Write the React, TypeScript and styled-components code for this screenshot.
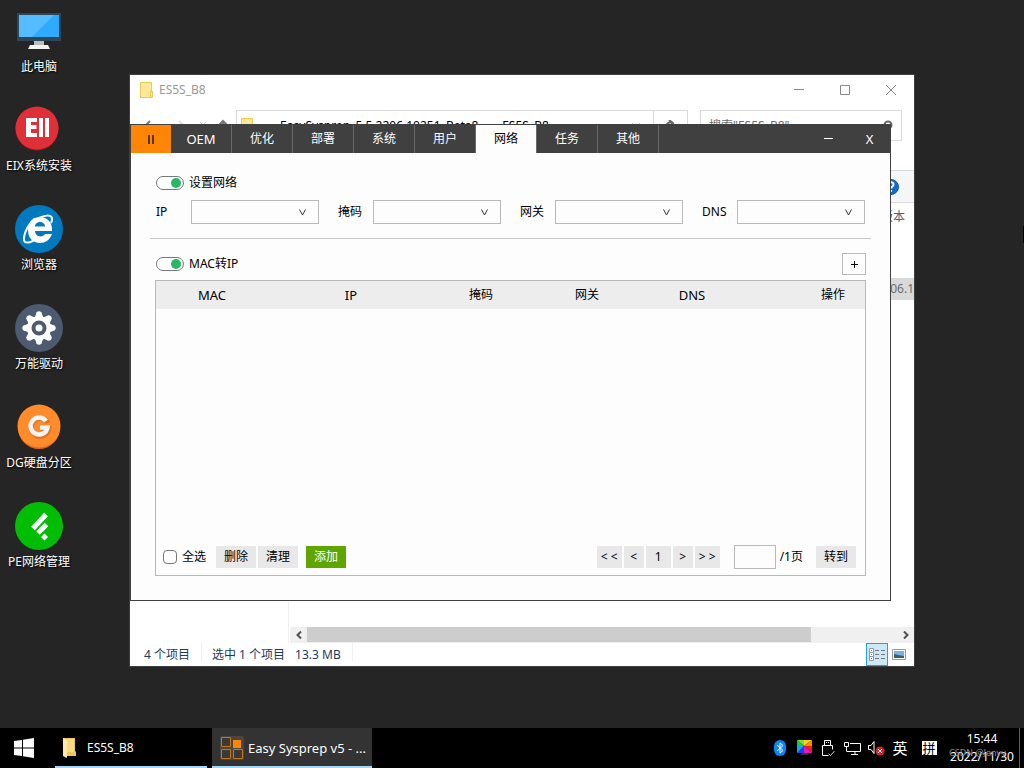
import React from "react";
import styled, { createGlobalStyle } from "styled-components";

const GlobalStyle = createGlobalStyle`
  *, *::before, *::after { box-sizing: border-box; }
  body {
    margin: 0;
    background: #252525;
    color: #000;
    font: 12px/16px "Noto Sans", "Noto Sans CJK SC", sans-serif;
  }
  button, input, select { font: inherit; color: inherit; margin: 0; padding: 0; border-radius: 0; }
  button { border: 0; background: none; }
  svg { display: block; flex: none; }
`;

/* ---------- desktop ---------- */

const Screen = styled.div`
  display: flex;
  flex-direction: column;
  min-height: 100vh;
  overflow: hidden;
`;

const Desktop = styled.main`
  position: relative;
  flex: 1;
`;

const Shortcuts = styled.nav`
  display: flex;
  flex-direction: column;
  width: 78px;
`;

const Shortcut = styled.button`
  display: flex;
  flex-direction: column;
  align-items: center;
  gap: 4px;
  height: 99px;
  padding-top: 7px;
  color: #fff;
  white-space: nowrap;
  text-shadow: 1px 1px 2px #000;
`;

const EdgeMark = styled.div`
  position: absolute;
  right: 0;
  top: 226px;
  width: 1px;
  height: 17px;
  background: #000;
`;

/* ---------- explorer window ---------- */

const Explorer = styled.section`
  position: absolute;
  inset: 74px 109px 61px 129px;
  display: flex;
  flex-direction: column;
  border: 1px solid #3c3e3f;
  background: #fff;
`;

const ExplorerTitle = styled.header`
  display: flex;
  align-items: center;
  gap: 6px;
  height: 29px;
  padding-left: 10px;
  color: #999;
`;

const CaptionButtons = styled.div`
  display: flex;
  margin-left: auto;
`;

const CaptionButton = styled.button`
  display: grid;
  place-items: center;
  width: 46px;
  height: 29px;
`;

const AddressRow = styled.div`
  display: flex;
  align-items: stretch;
  gap: 12px;
  height: 37px;
  padding: 6px 12px 0 10px;
`;

const NavArrows = styled.div`
  display: flex;
  align-items: center;
  width: 84px;
`;

const AddressBox = styled.div`
  display: flex;
  flex: 1;
  align-items: center;
  border: 1px solid #d9d9d9;
  padding-left: 4px;
  white-space: nowrap;
`;

const Crumb = styled.span`
  margin-left: 10px;
`;

const AddressEnd = styled.span`
  display: grid;
  place-items: center;
  align-self: stretch;
  width: 34px;
  height: 29px;
  border-left: ${(p: { $divided?: boolean }) => (p.$divided ? "1px solid #d9d9d9" : "0")};
`;

const SearchBox = styled.label`
  display: flex;
  align-items: center;
  justify-content: space-between;
  width: 202px;
  padding: 0 8px;
  border: 1px solid #d9d9d9;
`;

const SearchInput = styled.input`
  width: 150px;
  border: 0;
  outline: 0;
  &::placeholder { color: #6d6d6d; opacity: 1; }
`;

const HelpRow = styled.div`
  display: flex;
  align-items: center;
  justify-content: flex-end;
  height: 33px;
  margin-top: 29px;
  padding-right: 15px;
  border: solid #dadbdc;
  border-width: 1px 0;
  background: #f5f6f7;
`;

const ExplorerBody = styled.div`
  display: flex;
  flex: 1;
  min-height: 0;
`;

const FolderTree = styled.aside`
  width: 159px;
  border-right: 1px solid #f0f0f0;
`;

const FileList = styled.div`
  display: flex;
  flex-direction: column;
  flex: 1;
  padding-left: 1px;
  overflow: hidden;
`;

const FileHeading = styled.div`
  padding: 6px 9px 0;
  text-align: right;
  color: #4c607a;
`;

const FileRow = styled.div`
  height: 22px;
  margin-top: 53px;
  line-height: 22px;
  background: #d9d9d9;
  color: #6d6d6d;
  text-align: right;
`;

const HScroll = styled.div`
  display: flex;
  height: 16px;
  margin-top: auto;
  background: #f0f0f0;
`;

const ScrollArrow = styled.button`
  display: grid;
  place-items: center;
  width: 17px;
`;

const ScrollTrack = styled.div`
  flex: 1;
`;

const ScrollThumb = styled.div`
  width: 85.4%;
  height: 15px;
  background: #cdcdcd;
`;

const ExplorerStatus = styled.footer`
  display: flex;
  height: 23px;
  padding-left: 14px;
  line-height: 24px;
  color: #1e395b;
`;

const StatusItem = styled.span`
  display: flex;
  gap: 10px;
  height: 18px;
  padding-right: 11px;
  margin-right: 10px;
  border-right: 1px solid #f0f0f0;
`;

const ViewButtons = styled.div`
  display: flex;
  margin-left: auto;
`;

const ViewButton = styled.button`
  display: grid;
  place-items: center;
  width: ${(p: { $on?: boolean }) => (p.$on ? "22px" : "26px")};
  height: 23px;
  padding-right: ${(p: { $on?: boolean }) => (p.$on ? "0" : "4px")};
  border: ${(p: { $on?: boolean }) => (p.$on ? "1px solid #26a0da" : "0")};
  background: ${(p: { $on?: boolean }) => (p.$on ? "#cbe8f6" : "none")};
`;

/* ---------- Easy Sysprep window ---------- */

const Sysprep = styled.section`
  position: absolute;
  inset: 124px 133px 127px 130px;
  display: flex;
  flex-direction: column;
  border: 1px solid #404040;
  background: #fdfdfd;
`;

const TabBar = styled.header`
  display: flex;
  height: 28px;
  background: #404040;
  color: #fff;
`;

const LogoButton = styled.button`
  display: grid;
  place-items: center;
  width: 40px;
  background: #ff8507;
`;

const Tab = styled.button<{ $active?: boolean }>`
  width: 61px;
  border-right: 1px solid #696969;
  background: ${(p) => (p.$active ? "#fdfdfd" : "#404040")};
  color: ${(p) => (p.$active ? "#000" : "#fff")};
`;

const Latin = styled.span`
  font-size: 13px;
`;

const WindowButtons = styled.div`
  display: flex;
  margin-left: auto;
`;

const WindowButton = styled.button`
  display: grid;
  place-items: center;
  width: 41px;
`;

const Page = styled.div`
  display: flex;
  flex-direction: column;
  flex: 1;
  padding: 22px 24px 24px;
`;

const ToggleLabel = styled.label`
  display: flex;
  align-items: center;
  gap: 5px;
  padding-left: 1px;
`;

const Toggle = styled.input`
  appearance: none;
  display: flex;
  align-items: center;
  justify-content: flex-end;
  width: 28px;
  height: 14px;
  padding-right: 2px;
  border: 1px solid #777;
  border-radius: 7px;
  background: #fff;
  &::before {
    content: "";
    width: 10px;
    height: 10px;
    border-radius: 5px;
    background: #27b864;
  }
`;

const AddressFields = styled.div`
  display: flex;
  justify-content: space-between;
  margin-top: 9px;
  padding: 0 1px;
`;

const Field = styled.label`
  display: flex;
  align-items: center;
`;

const FieldName = styled.span`
  width: 35px;
`;

const Combo = styled.span`
  display: grid;
  align-items: center;
  width: 128px;
  height: 24px;
  border: 1px solid #b9b9b9;
  background: #fdfdfd;
  & > * { grid-area: 1 / 1; }
  & > svg { justify-self: end; margin-right: 12px; pointer-events: none; }
`;

const ComboSelect = styled.select`
  appearance: none;
  width: 100%;
  height: 100%;
  padding-left: 4px;
  border: 0;
  background: none;
`;

const Divider = styled.hr`
  width: calc(100% + 10px);
  height: 1px;
  margin: 14px -5px;
  border: 0;
  background: #c8c8c8;
`;

const MacHead = styled.div`
  display: flex;
  align-items: center;
  justify-content: space-between;
`;

const PlusButton = styled.button`
  display: grid;
  place-items: center;
  width: 24px;
  height: 22px;
  border: 1px solid #b9b9b9;
`;

const MacPanel = styled.div`
  display: flex;
  flex-direction: column;
  flex: 1;
  margin-top: 5px;
  border: 1px solid #b9b9b9;
`;

const MacTable = styled.table`
  width: 100%;
  table-layout: fixed;
  border-collapse: collapse;
  background: #ededed;
`;

const Th = styled.th<{ $width?: string; $end?: boolean }>`
  width: ${(p) => p.$width ?? "auto"};
  height: 28px;
  padding: ${(p) => (p.$end ? "0 20px 0 0" : "0")};
  font-weight: 400;
  text-align: ${(p) => (p.$end ? "right" : "center")};
`;

const PanelFooter = styled.div`
  display: flex;
  align-items: center;
  justify-content: space-between;
  margin-top: auto;
  padding: 0 9px 6px 7px;
`;

const Group = styled.div`
  display: flex;
  align-items: center;
  gap: 2px;
`;

const CheckLabel = styled.label`
  display: flex;
  align-items: center;
  gap: 5px;
  margin-right: 8px;
`;

const Check = styled.input`
  appearance: none;
  width: 14px;
  height: 14px;
  border: 1px solid #777;
  border-radius: 4px;
  background: #fff;
`;

const ActionButton = styled.button<{ $primary?: boolean; $width?: number }>`
  width: ${(p) => p.$width ?? 40}px;
  height: 22px;
  margin-left: ${(p) => (p.$primary ? "6px" : "0")};
  background: ${(p) => (p.$primary ? "#5fa500" : "#e8e8e8")};
  color: ${(p) => (p.$primary ? "#fff" : "#000")};
`;

const PageField = styled.label`
  display: flex;
  align-items: center;
  gap: 4px;
  margin: 0 11px 0 12px;
`;

const PageInput = styled.input`
  width: 42px;
  height: 24px;
  border: 1px solid #b9b9b9;
  background: #fdfdfd;
`;

/* ---------- taskbar ---------- */

const Taskbar = styled.footer`
  display: flex;
  height: 40px;
  background: #000;
  color: #fff;
`;

const StartButton = styled.button`
  display: grid;
  place-items: center;
  width: 48px;
`;

const Tasks = styled.div`
  display: flex;
  gap: 5px;
  padding-left: 7px;
`;

const Task = styled.button<{ $active?: boolean }>`
  display: flex;
  align-items: center;
  gap: ${(p) => (p.$active ? "4px" : "10px")};
  width: ${(p) => (p.$active ? "160px" : "152px")};
  padding: 2px 6px 0 ${(p) => (p.$active ? "8px" : "7px")};
  border-bottom: 2px solid #a3d8f7;
  background: ${(p) => (p.$active ? "#333" : "#000")};
  white-space: nowrap;
`;

const Tray = styled.div`
  display: flex;
  align-items: center;
  gap: 8px;
  margin-left: auto;
`;

const TrayIcon = styled.button`
  display: grid;
  place-items: center;
  width: 16px;
  height: 40px;
`;

const ImeMode = styled(TrayIcon)`
  font-size: 15px;
  margin-right: 5px;
`;

const ImeBox = styled.span`
  display: block;
  width: 15px;
  height: 14px;
  background: #fff;
  color: #000;
  font-size: 13px;
  line-height: 14px;
`;

const Clock = styled.time`
  position: relative;
  width: 75px;
  height: 40px;
  padding-top: 2px;
  line-height: 18px;
  text-align: center;
  border-right: 1px solid #5c5c5c;
  margin-right: 4px;
`;

const ClockLine = styled.span`
  display: block;
`;

const Watermark = styled.span`
  position: absolute;
  left: 4px;
  top: 18px;
  font-size: 9px;
  line-height: 14px;
  white-space: nowrap;
  color: #8a8a8a;
`;

/* ---------- drawings ---------- */

const Folder = () => (
  <svg width="13" height="16" viewBox="0 0 13 16">
    <path d="M.5 .5h11v15H.5z" fill="#ffe89a" stroke="#ecc94f" />
    <path d="M10.500 9.500h2v6h-2z" fill="#ffe89a" stroke="#ecc94f" />
  </svg>
);

const ChevronDown = () => (
  <svg width="7" height="7" viewBox="0 0 7 7" fill="none" stroke="#333">
    <path d="M.5 .5 3.500 6 6.500 .5" />
  </svg>
);

const MonitorIcon = () => (
  <svg width="48" height="48" viewBox="0 0 48 48">
    <path d="M2 6h44v28H2z" fill="#2f4654" />
    <path d="M4 8h40v22H4z" fill="#2eaaff" />
    <path d="M4 8h35L17 30H4z" fill="#54bcff" />
    <path d="M19 34h10v4H19z" fill="#b9bdc0" />
    <path d="M15 38h18l2 4H13z" fill="#f2f2f2" />
  </svg>
);

const EixIcon = () => (
  <svg width="48" height="48" viewBox="0 0 48 48">
    <circle cx="22" cy="23" r="21.500" fill="#b3121a" />
    <circle cx="22" cy="22" r="21.500" fill="#df2f38" />
    <path d="M11 12h11v4h-6v3h5.500v4H16v4h6v4H11zM24 12h4v19h-4zM30 12h4v19h-4z" fill="#fff" />
  </svg>
);

const BrowserIcon = () => (
  <svg width="48" height="48" viewBox="0 0 48 48">
    <circle cx="24" cy="24" r="24" fill="#0079be" />
    <path
      d="M13 25C13 17 18 12 25 12s12 5 12 12v2H20c0 6 8 7 10 3h7c-2 6-7 9-12 9-7 0-12-5-12-13zM20 21.500h10c0-6-10-6-10 0z"
      fill="#fff"
      fillRule="evenodd"
    />
    <path d="M20 13.500C11 21 7 34 10 37c2 1.500 7 0 11-3M24 13c6-3 11-3 12.500-1 1 2 .5 4-.5 6" fill="none" stroke="#fff" strokeWidth="2" />
  </svg>
);

const DriverIcon = () => (
  <svg width="48" height="48" viewBox="0 0 48 48">
    <circle cx="24" cy="24" r="24" fill="#4d5b70" />
    <g fill="#fff">
      {[0, 45, 90, 135].map((a) => (
        <path key={a} transform={`rotate(${a} 24 24)`} d="M21.500 8.500q2.500-2.500 5 0l2 6v19l-2 6q-2.500 2.500-5 0l-2-6v-19z" />
      ))}
      <circle cx="24" cy="24" r="12" />
    </g>
    <circle cx="24" cy="24" r="7.500" fill="#4d5b70" />
    <circle cx="24" cy="24" r="3.500" fill="#fff" />
  </svg>
);

const DiskIcon = () => (
  <svg width="48" height="48" viewBox="0 0 48 48">
    <circle cx="24" cy="25" r="21" fill="#e9641a" />
    <circle cx="24" cy="23" r="21.500" fill="#ff8b2b" />
    <path d="M32 18a9 9 0 1 0 1 6h-8" fill="none" stroke="#b95a12" strokeWidth="5" transform="translate(1 2)" opacity=".45" />
    <path d="M31 18a8.500 8.500 0 1 0 1.500 6.500H25" fill="none" stroke="#f4f4f6" strokeWidth="4.500" />
  </svg>
);

const NetworkToolIcon = () => (
  <svg width="48" height="48" viewBox="0 0 48 48">
    <circle cx="24" cy="24" r="24" fill="#02bd05" />
    <g stroke="#fff" strokeWidth="5">
      <path d="M18 26.500 31 12.500M23 31l8.500-8.500" />
    </g>
    <path d="M29.500 31.500l3.500 3.500-3.500 3.500-3.500-3.500z" fill="#fff" />
  </svg>
);

const shortcuts = [
  { name: "此电脑", icon: <MonitorIcon /> },
  { name: "EIX系统安装", icon: <EixIcon /> },
  { name: "浏览器", icon: <BrowserIcon /> },
  { name: "万能驱动", icon: <DriverIcon /> },
  { name: "DG硬盘分区", icon: <DiskIcon /> },
  { name: "PE网络管理", icon: <NetworkToolIcon /> },
];

const tabs = ["OEM", "优化", "部署", "系统", "用户", "网络", "任务", "其他"];
const fields = ["IP", "掩码", "网关", "DNS"];
const columns = [
  { name: "MAC", width: "15.8%" },
  { name: "IP", width: "23.4%" },
  { name: "掩码", width: "13.3%" },
  { name: "网关", width: "16.6%" },
  { name: "DNS", width: "13%" },
];
const pager = [
  { text: "< <", label: "首页", width: 25 },
  { text: "<", label: "上一页", width: 20 },
  { text: "1", label: "第1页", width: 25 },
  { text: ">", label: "下一页", width: 20 },
  { text: "> >", label: "末页", width: 25 },
];

const isLatin = (text: string) => /^[A-Z]+$/.test(text);
const Label = ({ children }: { children: string }) =>
  isLatin(children) ? <Latin>{children}</Latin> : <>{children}</>;

function ExplorerWindow() {
  return (
    <Explorer>
      <ExplorerTitle>
        <Folder />
        <span>ES5S_B8</span>
        <CaptionButtons>
          <CaptionButton aria-label="最小化">
            <svg width="10" height="10" stroke="#888"><path d="M0 4.500h10" /></svg>
          </CaptionButton>
          <CaptionButton aria-label="最大化">
            <svg width="10" height="10" fill="none" stroke="#888"><path d="M.5 .5h9v9h-9z" /></svg>
          </CaptionButton>
          <CaptionButton aria-label="关闭">
            <svg width="10" height="10" stroke="#888"><path d="M0 0l10 10M10 0L0 10" /></svg>
          </CaptionButton>
        </CaptionButtons>
      </ExplorerTitle>
      <AddressRow>
        <NavArrows>
          <svg width="90" height="14" viewBox="0 0 90 14" fill="none" strokeWidth="2">
            <path d="M10 2 5 7l5 5M5 7h11" stroke="#777" />
            <path d="M39 2l5 5-5 5M44 7H33" stroke="#ddd" />
            <path d="M60 3l3 3 3-3" stroke="#ccc" strokeWidth="1" />
            <path d="M78 7l5-5 5 5M83 2v11" stroke="#777" />
          </svg>
        </NavArrows>
        <AddressBox>
          <Folder />
          <Crumb>«</Crumb>
          <Crumb>EasySysprep_5.5.2206.10251_Beta8</Crumb>
          <Crumb>›</Crumb>
          <Crumb>ES5S_B8</Crumb>
          <CaptionButtons>
            <AddressEnd>
              <svg width="8" height="6" fill="none" stroke="#888"><path d="M.5 .5 4 4 7.500 .5" /></svg>
            </AddressEnd>
            <AddressEnd $divided>
              <svg width="12" height="12" viewBox="0 0 12 12" fill="none" stroke="#666" strokeWidth="2">
                <path d="M10 7a4.500 4.500 0 1 1-3-4.500M4 0l4 3-3 3" />
              </svg>
            </AddressEnd>
          </CaptionButtons>
        </AddressBox>
        <SearchBox>
          <SearchInput aria-label="搜索" placeholder={'搜索"ES5S_B8"'} />
          <svg width="12" height="12" fill="none" stroke="#666" strokeWidth="2">
            <circle cx="7" cy="5" r="3.500" /><path d="M5 8l-4 4" />
          </svg>
        </SearchBox>
      </AddressRow>
      <HelpRow>
        <svg width="16" height="16" viewBox="0 0 16 16">
          <circle cx="8" cy="8" r="7.500" fill="#0a6fd1" stroke="#0b55a0" />
          <path d="M5.500 6c0-3.500 5-3.500 5-.5 0 2-2.500 2-2.500 4M8 11v2" fill="none" stroke="#fff" strokeWidth="2" />
        </svg>
      </HelpRow>
      <ExplorerBody>
        <FolderTree />
        <FileList>
          <FileHeading>版本</FileHeading>
          <FileRow>06.1</FileRow>
          <HScroll>
            <ScrollArrow aria-label="向左滚动">
              <svg width="6" height="8" fill="none" stroke="#505050" strokeWidth="2"><path d="M5 .5 1.500 4 5 7.500" /></svg>
            </ScrollArrow>
            <ScrollTrack><ScrollThumb /></ScrollTrack>
            <ScrollArrow aria-label="向右滚动">
              <svg width="6" height="8" fill="none" stroke="#505050" strokeWidth="2"><path d="M1 .5 4.500 4 1 7.500" /></svg>
            </ScrollArrow>
          </HScroll>
        </FileList>
      </ExplorerBody>
      <ExplorerStatus>
        <StatusItem>4 个项目</StatusItem>
        <StatusItem><span>选中 1 个项目</span><span>13.3 MB</span></StatusItem>
        <ViewButtons>
          <ViewButton $on aria-label="详细信息">
            <svg width="16" height="13" viewBox="0 0 16 13" fill="none">
              <path d="M.5 .5h4v12h-4zM.5 4.500h4M.5 8.500h4" stroke="#999" fill="#fff" />
              <path d="M6 2.500h4M12 2.500h4M6 6.500h4M12 6.500h4M6 10.500h4M12 10.500h4" stroke="#777" />
              <path d="M2 2h1v1H2z" fill="#2a7" /><path d="M2 6h1v1H2z" fill="#38f" /><path d="M2 10h1v1H2z" fill="#d22" />
            </svg>
          </ViewButton>
          <ViewButton aria-label="大图标">
            <svg width="14" height="12" viewBox="0 0 14 12">
              <path d="M.5 .5h13v10H.5z" fill="#fff" stroke="#999" />
              <path d="M2 2h10v7H2z" fill="#78b2ee" />
              <path d="M2 5l4 1 6 1v2H2z" fill="#3b6257" />
            </svg>
          </ViewButton>
        </ViewButtons>
      </ExplorerStatus>
    </Explorer>
  );
}

function SysprepWindow() {
  return (
    <Sysprep>
      <TabBar>
        <LogoButton aria-label="Easy Sysprep">
          <svg width="6" height="9" fill="#5c3800"><path d="M0 0h2v9H0zM4 0h2v9H4z" /></svg>
        </LogoButton>
        {tabs.map((name) => (
          <Tab key={name} $active={name === "网络"}><Label>{name}</Label></Tab>
        ))}
        <WindowButtons>
          <WindowButton aria-label="最小化">
            <svg width="9" height="9" stroke="#fff"><path d="M0 3.500h9" /></svg>
          </WindowButton>
          <WindowButton aria-label="关闭"><Latin>X</Latin></WindowButton>
        </WindowButtons>
      </TabBar>
      <Page>
        <ToggleLabel><Toggle type="checkbox" defaultChecked />设置网络</ToggleLabel>
        <AddressFields>
          {fields.map((name) => (
            <Field key={name}>
              <FieldName>{name}</FieldName>
              <Combo>
                <ComboSelect aria-label={name} />
                <ChevronDown />
              </Combo>
            </Field>
          ))}
        </AddressFields>
        <Divider />
        <MacHead>
          <ToggleLabel><Toggle type="checkbox" defaultChecked />MAC转IP</ToggleLabel>
          <PlusButton aria-label="添加一行">
            <svg width="7" height="7" stroke="#000"><path d="M0 3.500h7M3.500 0v7" /></svg>
          </PlusButton>
        </MacHead>
        <MacPanel>
          <MacTable>
            <thead>
              <tr>
                {columns.map((c) => <Th key={c.name} $width={c.width}><Label>{c.name}</Label></Th>)}
                <Th $end>操作</Th>
              </tr>
            </thead>
          </MacTable>
          <PanelFooter>
            <Group>
              <CheckLabel><Check type="checkbox" />全选</CheckLabel>
              <ActionButton>删除</ActionButton>
              <ActionButton>清理</ActionButton>
              <ActionButton $primary>添加</ActionButton>
            </Group>
            <Group>
              {pager.map((p) => (
                <ActionButton key={p.label} aria-label={p.label} $width={p.width}>{p.text}</ActionButton>
              ))}
              <PageField><PageInput />/1页</PageField>
              <ActionButton>转到</ActionButton>
            </Group>
          </PanelFooter>
        </MacPanel>
      </Page>
    </Sysprep>
  );
}

function SystemTray() {
  return (
    <Tray>
      <TrayIcon aria-label="蓝牙">
        <svg width="12" height="16" viewBox="0 0 12 16">
          <rect width="12" height="16" rx="6" fill="#0a84ff" />
          <path d="M3 5l6 5.500L6 13V3l3 2.500L3 11" fill="none" stroke="#fff" />
        </svg>
      </TrayIcon>
      <TrayIcon aria-label="显示设置">
        <svg width="15" height="16" viewBox="0 0 15 16">
          <path d="M7 6 0 0h7z" fill="#7ee01c" /><path d="M7 6V0h8z" fill="#ffcf1a" />
          <path d="M7 6l8-6v6z" fill="#ff8a00" /><path d="M7 6h8v7z" fill="#f21d1d" />
          <path d="M7 6l8 7H7z" fill="#e01cc0" /><path d="M7 6v7H0z" fill="#2a35f0" />
          <path d="M7 6l-7 7V6z" fill="#12a8ee" /><path d="M7 6H0V0z" fill="#13c95a" />
          <path d="M5 13h5l2 2H3z" fill="#333" />
        </svg>
      </TrayIcon>
      <TrayIcon aria-label="安全删除硬件">
        <svg width="14" height="17" viewBox="0 0 14 17" fill="none" stroke="#fff">
          <path d="M3.500 5V.5h6V5M5 2.500h1M7 2.500h1M1.500 5.500h10v4M1.500 5.500v10h6" />
          <path d="M7.500 13.500l2 2 4-4.500" stroke="#ccc" />
        </svg>
      </TrayIcon>
      <TrayIcon aria-label="网络">
        <svg width="17" height="15" viewBox="0 0 17 15" fill="none" stroke="#fff">
          <path d="M.5 1.500h4v4h-4zM2.500 5.500v5M6 2.500h10.500v8H3M11 10.500v3M7 13.500h7" />
        </svg>
      </TrayIcon>
      <TrayIcon aria-label="音量">
        <svg width="17" height="16" viewBox="0 0 17 16" fill="none" stroke="#fff">
          <path d="M.5 5.500H3l3-4v12l-3-4H.5z" />
          <circle cx="12" cy="11" r="4.500" fill="#d8222c" stroke="none" />
          <path d="M10 9l4 4M14 9l-4 4" />
        </svg>
      </TrayIcon>
      <ImeMode>英</ImeMode>
      <TrayIcon><ImeBox>拼</ImeBox></TrayIcon>
      <Clock>
        <ClockLine>15:44</ClockLine>
        <ClockLine>2022/11/30</ClockLine>
        <Watermark>CSDN @Jenvy</Watermark>
      </Clock>
    </Tray>
  );
}

export default function App() {
  return (
    <Screen>
      <GlobalStyle />
      <Desktop>
        <Shortcuts>
          {shortcuts.map((s) => (
            <Shortcut key={s.name}>{s.icon}<span>{s.name}</span></Shortcut>
          ))}
        </Shortcuts>
        <ExplorerWindow />
        <SysprepWindow />
        <EdgeMark />
      </Desktop>
      <Taskbar>
        <StartButton aria-label="开始">
          <svg width="20" height="20" viewBox="0 0 20 20" fill="#fff">
            <path d="M0 3l8-1v7.500H0zM9 1.800 20 0v9.500H9zM0 10.500h8V18l-8-1zM9 10.500h11V20L9 18.300z" />
          </svg>
        </StartButton>
        <Tasks>
          <Task>
            <svg width="15" height="20" viewBox="0 0 15 20">
              <path d="M1 0h12v13l1 1v4H1z" fill="#f0c75c" />
              <path d="M1 0l4 2v18l-4-2z" fill="#ffe9a6" />
              <path d="M5 1h7v13H5z" fill="#fbdb80" />
            </svg>
            ES5S_B8
          </Task>
          <Task $active>
            <svg width="24" height="24" viewBox="0 0 24 24">
              <rect width="24" height="24" rx="2" fill="#4a4540" />
              <path d="M1.500 1.500h9v9h-9zM1.500 13.500h9v9h-9zM13.500 13.500h9v9h-9z" fill="#3c3936" stroke="#c8740f" />
              <path d="M13 4h8v8h-8z" fill="#ff8507" />
            </svg>
            <Latin>Easy Sysprep v5 - ...</Latin>
          </Task>
        </Tasks>
        <SystemTray />
      </Taskbar>
    </Screen>
  );
}
